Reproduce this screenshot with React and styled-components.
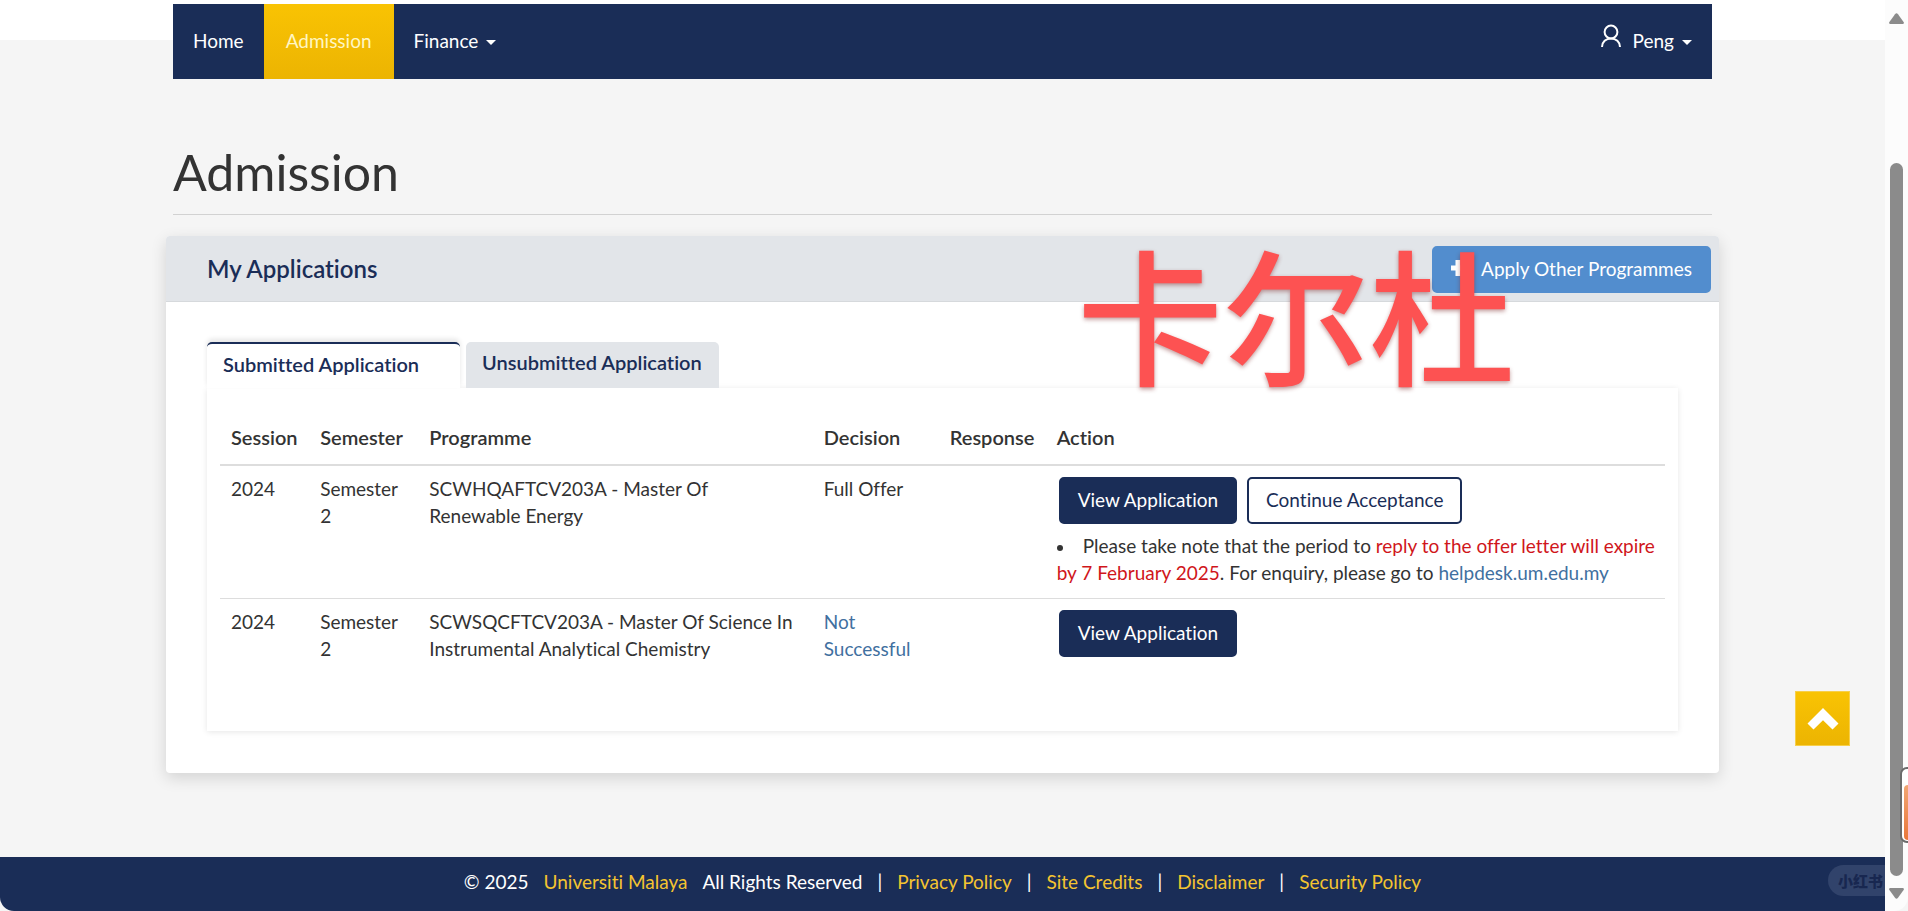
import React from "react";
import styled, { createGlobalStyle, css } from "styled-components";

const navy = "#1a2d57";
const gold = "linear-gradient(#f9c303, #ecb402)";

const GlobalStyle = createGlobalStyle`
  * { box-sizing: border-box; }
  body {
    margin: 0;
    background: #f5f5f5;
    color: #333;
    font-family: Lato, "Noto Sans", "Noto Sans CJK SC", sans-serif;
    font-size: 19px;
    line-height: 27px;
    font-variant-ligatures: none;
  }
  a { text-decoration: none; }
  button { font: inherit; font-variant-ligatures: none; cursor: pointer; }
`;

const Screen = styled.div`
  display: grid;
  grid-template-columns: minmax(0, 1fr) 23px;
  min-height: 100vh;
  border-radius: 0 0 14px 14px;
  overflow: hidden;
`;

const Page = styled.div`
  display: flex;
  flex-direction: column;
`;

const Container = styled.div`
  width: calc(100% - 346px);
  margin: 0 auto;
`;

const TopBand = styled.header`
  height: 79px;
  padding-top: 4px;
  background: linear-gradient(#fff 40px, #f5f5f5 40px);
`;

const NavBar = styled(Container).attrs({ as: "nav" })`
  display: flex;
  height: 75px;
  background: ${navy};
`;

const NavLink = styled.a`
  display: flex;
  align-items: center;
  gap: 8px;
  padding: 0 ${(p) => (p.$active ? 22 : 20)}px 2px;
  color: ${(p) => (p.$active ? "#fff6c4" : "#fff")};
  background: ${(p) => (p.$active ? gold : "none")};
  margin-left: ${(p) => (p.$end ? "auto" : 0)};
`;

const Caret = styled.span`
  border: 5px solid transparent;
  border-top-color: currentColor;
  border-bottom: 0;
  margin-top: 4px;
`;

const PageTitle = styled.h1`
  margin: 0 0 21px;
  padding: 61px 0 10px;
  border-bottom: 1px solid #d2d2d2;
  font-size: 50px;
  font-weight: 400;
  line-height: 64px;
`;

const Card = styled.section`
  margin: 0 -7px 84px;
  background: #fff;
  border-radius: 4px;
  box-shadow: 0 5px 16px rgba(0, 0, 0, 0.14);
`;

const CardHead = styled.div`
  display: flex;
  align-items: center;
  justify-content: space-between;
  height: 66px;
  padding: 1px 8px 0 41px;
  background: #e2e5e9;
  border-bottom: 1px solid #d6d9dc;
  border-radius: 4px 4px 0 0;
`;

const CardTitle = styled.h2`
  margin: 0;
  padding-bottom: 2px;
  color: ${navy};
  font-size: 24px;
  font-weight: 600;
`;

const Button = styled.button`
  display: inline-flex;
  align-items: center;
  height: 47px;
  gap: 16px;
  padding: 0 17px 2px;
  border: 2px solid ${navy};
  border-radius: 5px;
  background: ${navy};
  color: #fff;
  white-space: nowrap;
  ${(p) => p.$kind === "outline" && css`background: #fff; color: ${navy};`}
  ${(p) => p.$kind === "blue" && css`background: #528dce; border-color: #528dce;`}
`;

const CardBody = styled.div`
  padding: 40px 41px 42px;
`;

const Tabs = styled.div`
  position: relative;
  z-index: 1;
  display: flex;
  gap: 6px;
`;

const Tab = styled.button`
  width: 253px;
  height: 46px;
  padding: 0 16px 5px;
  border: 0;
  border-radius: 5px 5px 0 0;
  background: #e2e5e9;
  color: ${navy};
  font-size: 20px;
  font-weight: 600;
  text-align: left;
  white-space: nowrap;
  ${(p) => p.$active && css`
    padding-bottom: 3px;
    border-top: 2px solid ${navy};
    background: #fff;
    box-shadow: 0 -3px 5px rgba(0, 0, 0, 0.1);
  `}
`;

const Panel = styled.div`
  position: relative;
  height: 343px;
  padding: 27px 13px;
  background: #fff;
  box-shadow: 0 1px 6px rgba(0, 0, 0, 0.1);
`;

const Table = styled.table`
  width: 100%;
  table-layout: fixed;
  border-collapse: collapse;
`;

const Th = styled.th`
  height: 50px;
  padding: 9px 0 13px 11px;
  border-bottom: 2px solid #ddd;
  font-size: 20px;
  font-weight: 600;
  text-align: left;
`;

const Td = styled.td`
  padding: 9px 10px 12px 11px;
  border-top: 1px solid #ddd;
  vertical-align: top;
`;

const Line = styled.span`
  display: block;
  white-space: nowrap;
`;

const Actions = styled.div`
  display: flex;
  gap: 10px;
  padding: 2px 0 0 2px;
`;

const Notes = styled.ul`
  margin: 8px 0 0;
  padding: 0;
  list-style: none;
`;

const Bullet = styled.span`
  display: inline-block;
  width: 6px;
  height: 6px;
  margin-right: 20px;
  border-radius: 50%;
  background: #333;
  vertical-align: middle;
`;

const Alert = styled.span`
  color: #d0161b;
`;

const TextLink = styled.a`
  color: #41709f;
`;

const Footer = styled.footer`
  display: flex;
  justify-content: center;
  gap: 15px;
  height: 54px;
  margin-top: auto;
  padding-top: 11px;
  background: ${navy};
  color: #fff;
  white-space: nowrap;
`;

const FooterLink = styled.a`
  color: #f4c430;
`;

const ScrollRail = styled.aside`
  display: flex;
  flex-direction: column;
  align-items: center;
  gap: 12px;
  padding: 13px 0 12px;
  background: #fcfcfc;
`;

const RailThumb = styled.div`
  flex: 1;
  width: 13px;
  margin-top: 127px;
  border-radius: 7px;
  background: #8b8b8b;
`;

const ToTop = styled.button`
  position: fixed;
  right: 58px;
  bottom: 165px;
  width: 55px;
  height: 55px;
  padding: 0;
  border: 1px solid #f7cf4a;
  background: ${gold};
  line-height: 0;
`;

const SideWidget = styled.div`
  position: fixed;
  right: -20px;
  bottom: 68px;
  width: 28px;
  height: 76px;
  padding: 16px 2px 1px;
  border: 2px solid #6b6b6b;
  border-radius: 7px;
  background: #fff;

  &::before {
    content: "";
    display: block;
    height: 100%;
    border-radius: 4px;
    background: linear-gradient(#f2a673, #e9773a);
  }
`;

const Watermark = styled.div`
  position: fixed;
  right: 23px;
  bottom: 15px;
  height: 31px;
  padding: 0 2px 0 10px;
  border-radius: 16px 0 0 16px;
  background: #31436b;
  color: #182750;
  font: 900 15px/31px "Noto Sans CJK SC", sans-serif;
`;

const Stamp = styled.div`
  position: absolute;
  z-index: 2;
  top: 221px;
  right: 393px;
  color: #fd5252;
  font: 500 146px/180px "Noto Sans CJK SC", sans-serif;
  white-space: nowrap;
  text-shadow: 0 2px 4px rgba(120, 30, 30, 0.45);
  pointer-events: none;
`;

const columns = [
  ["Session", "6.17%"],
  ["Semester", "7.55%"],
  ["Programme", "27.3%"],
  ["Decision", "8.72%"],
  ["Response", "7.4%"],
  ["Action", "42.86%"],
];

const rows = [
  {
    programme: ["SCWHQAFTCV203A - Master Of", "Renewable Energy"],
    decision: "Full Offer",
    pending: true,
  },
  {
    programme: ["SCWSQCFTCV203A - Master Of Science In", "Instrumental Analytical Chemistry"],
    decision: ["Not", "Successful"],
  },
];

const UserIcon = () => (
  <svg width="22" height="24" viewBox="0 0 22 24" fill="none" stroke="#fff" strokeWidth="2">
    <circle cx="11" cy="8" r="6.4" />
    <path d="M2 23C2 17.800 6 14.400 11 14.400s9 3.400 9 8.600" />
  </svg>
);

const UserIconSlot = styled.span`
  display: flex;
  margin-bottom: 10px;
  margin-right: 3px;
`;

const PlusIcon = () => (
  <svg width="14" height="18" viewBox="0 0 14 18" fill="#fff">
    <path d="M4.500 1h5v5.500H14v5H9.500V17h-5v-5.500H0v-5h4.500z" />
  </svg>
);

const RailArrow = ({ down }) => (
  <svg width="15" height="11" viewBox="0 0 15 11" fill="#8b8b8b">
    {down ? (
      <path d="M1 0h13q1.500.5.6 2L9 9.800q-1.500 1.700-3 0L.4 2Q-.5.5 1 0z" />
    ) : (
      <path d="M1 11h13q1.500-.5.6-2L9 1.200q-1.500-1.700-3 0L.4 9Q-.5 10.500 1 11z" />
    )}
  </svg>
);

export default function App() {
  return (
    <>
      <GlobalStyle />
      <Screen>
        <Page>
          <TopBand>
            <NavBar>
              <NavLink href="#home">Home</NavLink>
              <NavLink href="#admission" $active>Admission</NavLink>
              <NavLink href="#finance">Finance <Caret /></NavLink>
              <NavLink href="#account" $end>
                <UserIconSlot><UserIcon /></UserIconSlot>
                Peng <Caret />
              </NavLink>
            </NavBar>
          </TopBand>
          <Container as="main">
            <PageTitle>Admission</PageTitle>
            <Card>
              <CardHead>
                <CardTitle>My Applications</CardTitle>
                <Button $kind="blue"><PlusIcon />Apply Other Programmes</Button>
              </CardHead>
              <CardBody>
                <Tabs role="tablist">
                  <Tab role="tab" aria-selected="true" $active>Submitted Application</Tab>
                  <Tab role="tab" aria-selected="false">Unsubmitted Application</Tab>
                </Tabs>
                <Panel role="tabpanel">
                  <Table>
                    <colgroup>
                      {columns.map(([name, width]) => <col key={name} width={width} />)}
                    </colgroup>
                    <thead>
                      <tr>{columns.map(([name]) => <Th key={name}>{name}</Th>)}</tr>
                    </thead>
                    <tbody>
                      {rows.map((row) => (
                        <tr key={row.programme[0]}>
                          <Td>2024</Td>
                          <Td>Semester 2</Td>
                          <Td>{row.programme.map((line) => <Line key={line}>{line}</Line>)}</Td>
                          <Td>
                            {row.pending ? row.decision : (
                              <TextLink href="#decision">
                                {row.decision.map((line) => <Line key={line}>{line}</Line>)}
                              </TextLink>
                            )}
                          </Td>
                          <Td />
                          <Td>
                            <Actions>
                              <Button>View Application</Button>
                              {row.pending && <Button $kind="outline">Continue Acceptance</Button>}
                            </Actions>
                            {row.pending && (
                              <Notes>
                                <li>
                                  <Bullet />Please take note that the period to{" "}
                                  <Alert>reply to the offer letter will expire by 7 February 2025</Alert>
                                  . For enquiry, please go to{" "}
                                  <TextLink href="#helpdesk">helpdesk.um.edu.my</TextLink>
                                </li>
                              </Notes>
                            )}
                          </Td>
                        </tr>
                      ))}
                    </tbody>
                  </Table>
                </Panel>
              </CardBody>
            </Card>
          </Container>
          <Footer>
            <span>© 2025</span>
            <FooterLink href="#um">Universiti Malaya</FooterLink>
            <span>All Rights Reserved</span>
            <span>|</span>
            <FooterLink href="#privacy">Privacy Policy</FooterLink>
            <span>|</span>
            <FooterLink href="#credits">Site Credits</FooterLink>
            <span>|</span>
            <FooterLink href="#disclaimer">Disclaimer</FooterLink>
            <span>|</span>
            <FooterLink href="#security">Security Policy</FooterLink>
          </Footer>
        </Page>
        <ScrollRail aria-hidden="true">
          <RailArrow />
          <RailThumb />
          <RailArrow down />
        </ScrollRail>
      </Screen>
      <ToTop aria-label="Back to top">
        <svg width="32" height="24" viewBox="0 0 32 24" fill="#fff">
          <path d="M16 1 31.500 16.500 25.500 22.500 16 13.300 6.500 22.500.5 16.500z" />
        </svg>
      </ToTop>
      <Stamp>卡尔杜</Stamp>
      <Watermark>小红书</Watermark>
      <SideWidget />
    </>
  );
}
